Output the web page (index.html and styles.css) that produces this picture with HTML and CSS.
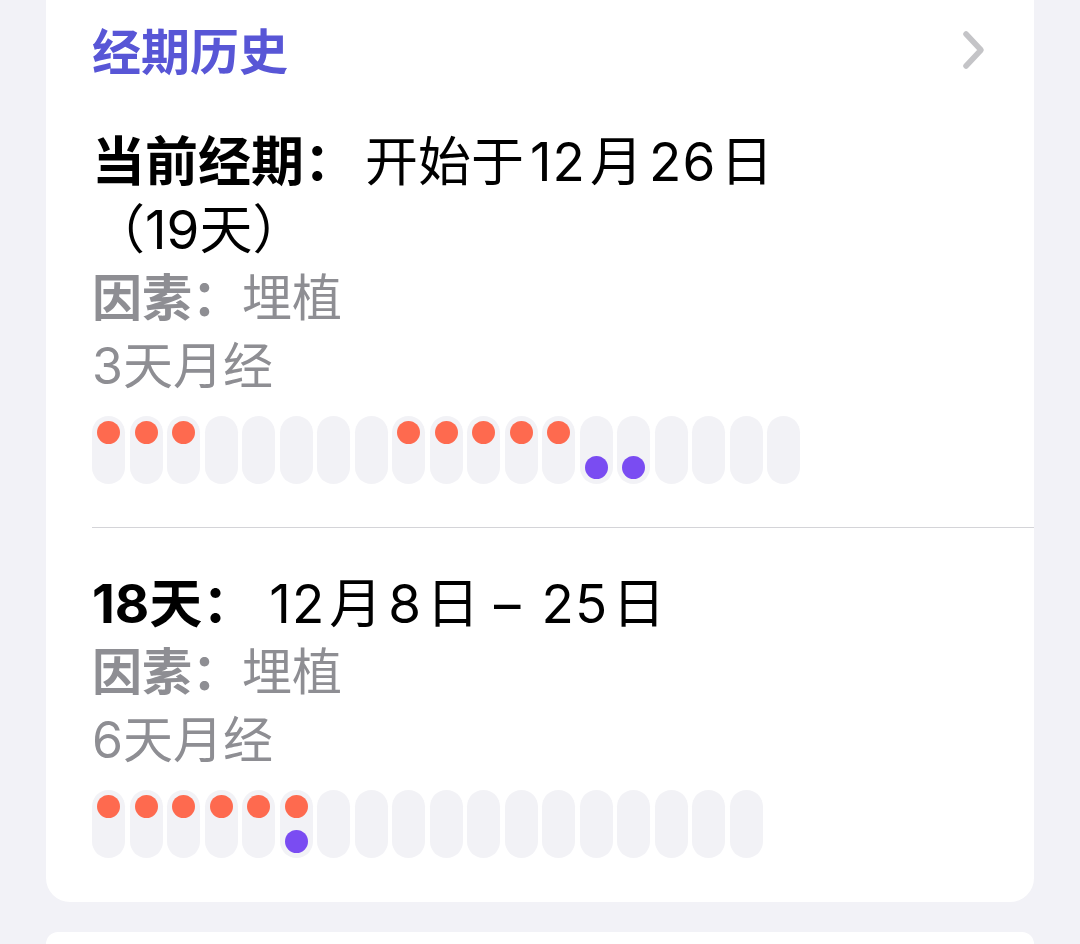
FILE: index.html
```html
<!DOCTYPE html>
<html lang="zh-CN">
<head>
<meta charset="utf-8">
<link rel="stylesheet" href="styles.css">
</head>
<body>
<div class="card">
  <div class="header">
    <span class="title">经期历史</span>
    <svg class="chevron" width="24" height="40" viewBox="0 0 24 40"><path d="M4 4 L19 20 L4 36" fill="none" stroke="#c4c4c7" stroke-width="5.5" stroke-linecap="round" stroke-linejoin="round"/></svg>
  </div>

  <div class="section first">
    <div class="line"><b class="label">当前经期：</b>开始于<span class="num">12</span>月<span class="num">26</span>日<br>（19天）</div>
    <div class="line muted"><b>因素：</b>埋植</div>
    <div class="line muted">3天月经</div>
    <div class="pills">
      <div class="pill"><i class="dot red"></i><i class="dot"></i></div>
      <div class="pill"><i class="dot red"></i><i class="dot"></i></div>
      <div class="pill"><i class="dot red"></i><i class="dot"></i></div>
      <div class="pill"><i class="dot"></i><i class="dot"></i></div>
      <div class="pill"><i class="dot"></i><i class="dot"></i></div>
      <div class="pill"><i class="dot"></i><i class="dot"></i></div>
      <div class="pill"><i class="dot"></i><i class="dot"></i></div>
      <div class="pill"><i class="dot"></i><i class="dot"></i></div>
      <div class="pill"><i class="dot red"></i><i class="dot"></i></div>
      <div class="pill"><i class="dot red"></i><i class="dot"></i></div>
      <div class="pill"><i class="dot red"></i><i class="dot"></i></div>
      <div class="pill"><i class="dot red"></i><i class="dot"></i></div>
      <div class="pill"><i class="dot red"></i><i class="dot"></i></div>
      <div class="pill"><i class="dot"></i><i class="dot purple"></i></div>
      <div class="pill"><i class="dot"></i><i class="dot purple"></i></div>
      <div class="pill"><i class="dot"></i><i class="dot"></i></div>
      <div class="pill"><i class="dot"></i><i class="dot"></i></div>
      <div class="pill"><i class="dot"></i><i class="dot"></i></div>
      <div class="pill"><i class="dot"></i><i class="dot"></i></div>
    </div>
  </div>

  <div class="section second">
    <div class="line"><b class="label">18天：</b><span class="num">12</span>月<span class="num">8</span>日 – <span class="num">25</span>日</div>
    <div class="line muted"><b>因素：</b>埋植</div>
    <div class="line muted">6天月经</div>
    <div class="pills">
      <div class="pill"><i class="dot red"></i><i class="dot"></i></div>
      <div class="pill"><i class="dot red"></i><i class="dot"></i></div>
      <div class="pill"><i class="dot red"></i><i class="dot"></i></div>
      <div class="pill"><i class="dot red"></i><i class="dot"></i></div>
      <div class="pill"><i class="dot red"></i><i class="dot"></i></div>
      <div class="pill"><i class="dot red"></i><i class="dot purple"></i></div>
      <div class="pill"><i class="dot"></i><i class="dot"></i></div>
      <div class="pill"><i class="dot"></i><i class="dot"></i></div>
      <div class="pill"><i class="dot"></i><i class="dot"></i></div>
      <div class="pill"><i class="dot"></i><i class="dot"></i></div>
      <div class="pill"><i class="dot"></i><i class="dot"></i></div>
      <div class="pill"><i class="dot"></i><i class="dot"></i></div>
      <div class="pill"><i class="dot"></i><i class="dot"></i></div>
      <div class="pill"><i class="dot"></i><i class="dot"></i></div>
      <div class="pill"><i class="dot"></i><i class="dot"></i></div>
      <div class="pill"><i class="dot"></i><i class="dot"></i></div>
      <div class="pill"><i class="dot"></i><i class="dot"></i></div>
      <div class="pill"><i class="dot"></i><i class="dot"></i></div>
    </div>
  </div>
</div>
<div class="card next"></div>
</body>
</html>
```
FILE: styles.css
```css
html, body {
  margin: 0;
  padding: 0;
  background: #f2f2f7;
  height: 944px;
  overflow: hidden;
  font-family: "Inter", "Noto Sans CJK SC", sans-serif;
}

.card {
  margin-left: 46px;
  width: 988px;
  background: #ffffff;
  border-radius: 0 0 24px 24px;
}

.card.next {
  margin-top: 30px;
  height: 12px;
  border-radius: 24px 24px 0 0;
}

.header {
  display: flex;
  align-items: center;
  justify-content: space-between;
  padding: 19px 48px 0 46px;
  height: 60px;
}

.title {
  font-size: 49px;
  line-height: 60px;
  font-weight: 700;
  color: #5856d6;
  font-family: "Noto Sans CJK SC", sans-serif;
}

.chevron {
  display: block;
  margin-top: 2px;
}

.section.first {
  margin-left: 46px;
  padding-top: 49px;
  padding-bottom: 43px;
  border-bottom: 1px solid #d4d4d8;
}

.section.second {
  padding-left: 46px;
  padding-top: 42px;
  padding-bottom: 44px;
}

.line {
  font-size: 53px;
  line-height: 68px;
  color: #000000;
}

.line b {
  font-weight: 700;
}

.line .label {
  margin-right: 8px;
}

.num {
  margin: 0 4px 0 6px;
  letter-spacing: 0.02em;
}

.muted {
  font-size: 50px;
  color: #8e8e93;
}

.pills {
  display: flex;
  gap: 4.5px;
  margin-top: 16px;
}

.pill {
  width: 33px;
  height: 68px;
  box-sizing: border-box;
  padding: 5px;
  border-radius: 16.5px;
  background: #f2f2f6;
  display: flex;
  flex-direction: column;
  justify-content: space-between;
}

.dot {
  display: block;
  width: 23px;
  height: 23px;
  border-radius: 50%;
}

.dot.red {
  background: #fe6a4f;
}

.dot.purple {
  background: #7a4cf2;
}
```
